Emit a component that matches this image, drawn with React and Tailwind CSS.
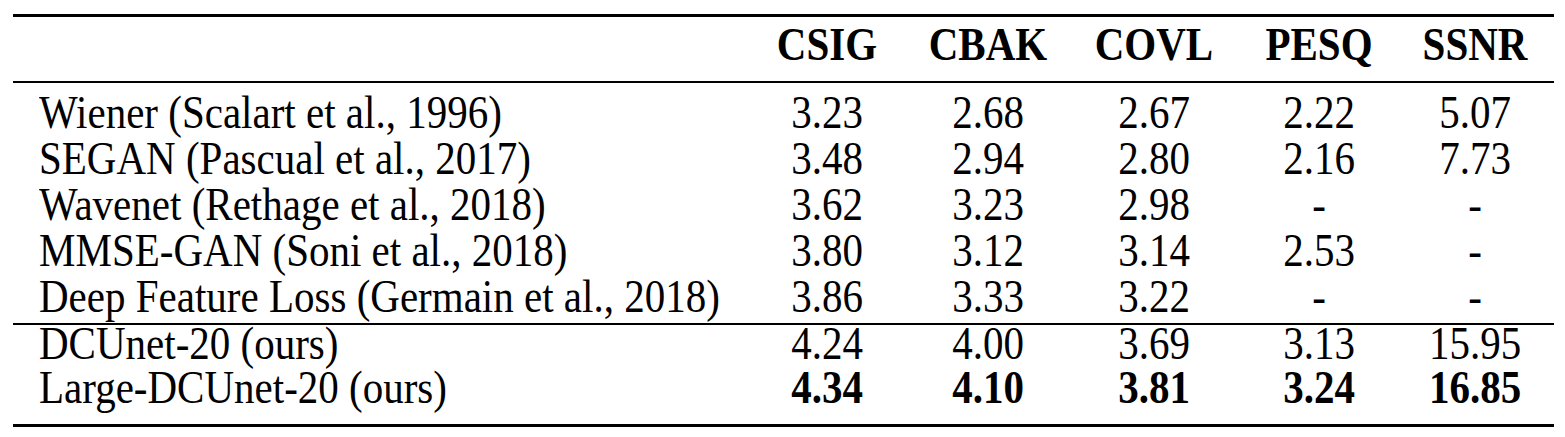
import React from 'react';

const cols = 'grid grid-cols-[737px_154px_168px_164px_166px_146px] scale-y-[1.13]';

const rows = [
    ['Wiener (Scalart et al., 1996)', '3.23', '2.68', '2.67', '2.22', '5.07'],
    ['SEGAN (Pascual et al., 2017)', '3.48', '2.94', '2.80', '2.16', '7.73'],
    ['Wavenet (Rethage et al., 2018)', '3.62', '3.23', '2.98', '-', '-'],
    ['MMSE-GAN (Soni et al., 2018)', '3.80', '3.12', '3.14', '2.53', '-'],
    ['Deep Feature Loss (Germain et al., 2018)', '3.86', '3.33', '3.22', '-', '-'],
];

const Row = ({ cells, className = '', bold = false }) => (
    <div className={`${cols} ${className}`}>
        <div className="pl-[26px] whitespace-nowrap">{cells[0]}</div>
        {cells.slice(1).map((c, i) => (
            <div key={i} className={`text-center ${bold ? 'font-bold' : ''}`}>{c}</div>
        ))}
    </div>
);

const App = () => {
    return (
        <div className="w-[1565px] h-[437px] bg-white pt-[14px] font-['Liberation_Serif',serif] text-[41px] text-black">
            <div className="ml-[13px] w-[1541px]">
                <div className="h-[3px] bg-black" />

                <div className="pt-[6px] pb-[12px]">
                    <div className={`${cols} leading-[46px] origin-[50%_37px] font-bold`}>
                        <div />
                        <div className="text-center">CSIG</div>
                        <div className="text-center">CBAK</div>
                        <div className="text-center">COVL</div>
                        <div className="text-center">PESQ</div>
                        <div className="text-center">SSNR</div>
                    </div>
                </div>

                <div className="h-[2px] bg-black" />

                <div className="pt-[8px] pb-[2px]">
                    {rows.map((r) => (
                        <Row key={r[0]} cells={r} className="leading-[46px] origin-[50%_37px]" />
                    ))}
                </div>

                <div className="h-[2px] bg-black" />

                <div className="pb-[11px]">
                    <Row
                        cells={['DCUnet-20 (ours)', '4.24', '4.00', '3.69', '3.13', '15.95']}
                        className="leading-[40px] origin-[50%_34px]"
                    />
                    <Row
                        cells={['Large-DCUnet-20 (ours)', '4.34', '4.10', '3.81', '3.24', '16.85']}
                        className="leading-[48px] origin-[50%_38px]"
                        bold
                    />
                </div>

                <div className="h-[3px] bg-black" />
            </div>
        </div>
    );
};

export default App;
